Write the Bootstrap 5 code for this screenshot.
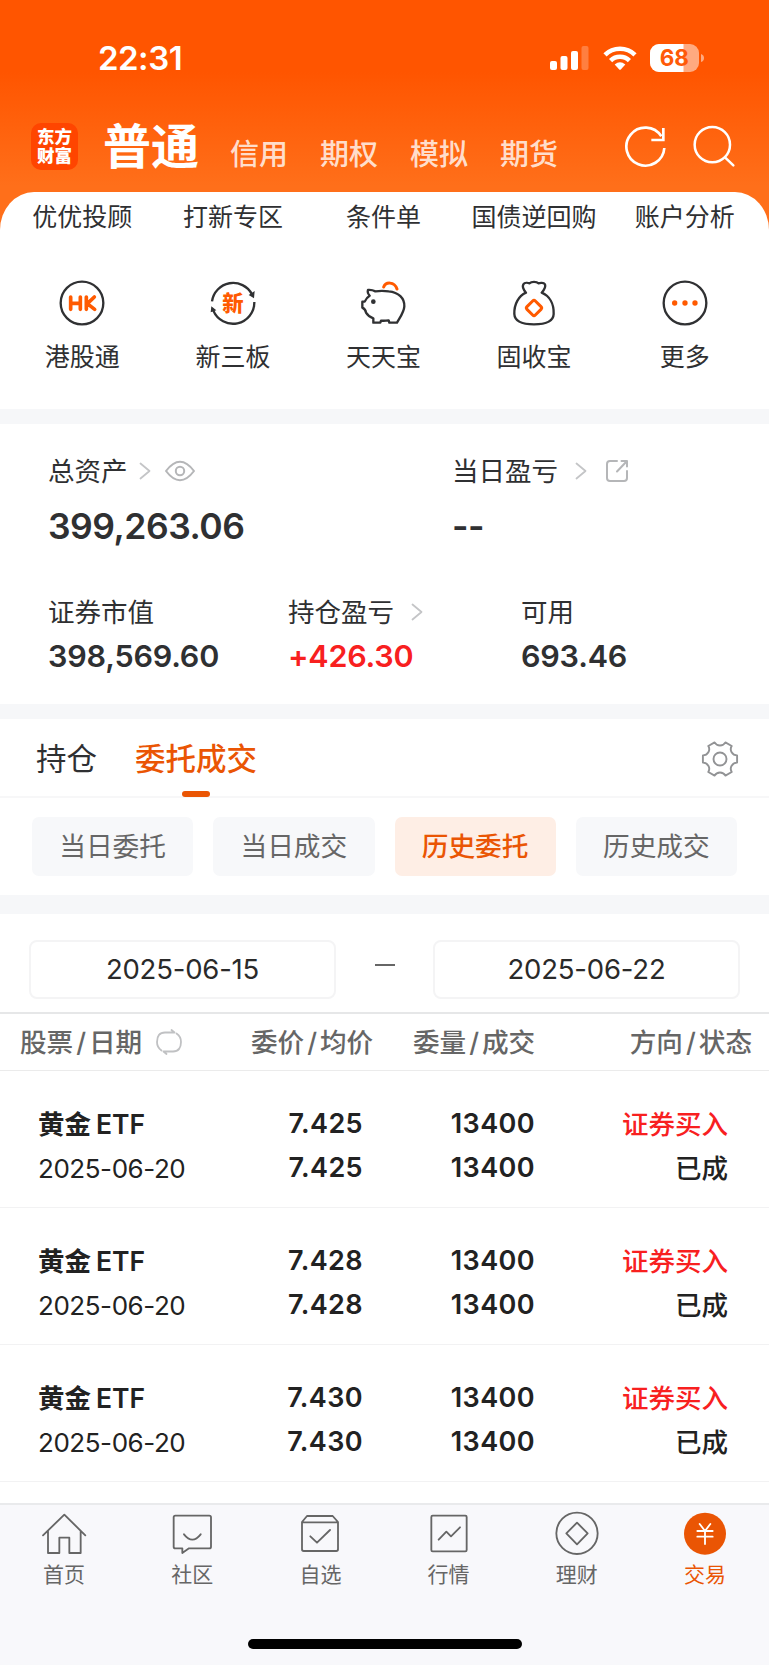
<!DOCTYPE html>
<html lang="zh-CN">
<head>
    <meta charset="UTF-8">
    <meta name="viewport" content="width=device-width, initial-scale=1.0">
    <title>交易 - 东方财富</title>
    <link href="https://cdn.jsdelivr.net/npm/bootstrap@5.3.0/dist/css/bootstrap.min.css" rel="stylesheet">
    <style>
        body {
            font-family: Inter, "Noto Sans CJK SC", sans-serif;
            color: #2f3032;
            background: #fff;
            height: 1665px;
            overflow: hidden;
        }
        svg { display: block; flex: none; fill: none; stroke-linecap: round; stroke-linejoin: round; }
        .text-brand { color: #ea5504 !important; }
        .text-rise { color: #f8201f; }

        /* Header */
        .top-area { background: linear-gradient(#ff5500 0, #ff5500 72px, #ff6f1a 186px, #ff6f1a 100%); }
        .status-bar { height: 115px; padding: 0 65px 0 98px; }
        .clock { font-size: 33px; line-height: 40px; font-weight: 600; letter-spacing: -.5px; }
        .wifi { margin-left: 14px; stroke-linecap: butt; }
        .battery { margin-left: 13px; }
        .account-bar { height: 77px; padding: 0 33px 0 31px; }
        .logo { width: 47px; height: 47px; border-radius: 10px; background: #ff4500; font-size: 17.5px; line-height: 19px; font-weight: 900; padding-top: 4px; }
        .account-main { font-size: 48px; line-height: 62px; font-weight: 700; margin-left: 25px; padding-top: 1px; }
        .account-tabs { margin: 22px 0 0 31px; }
        .account-tab { font-size: 29px; line-height: 36px; font-weight: 500; color: rgba(255, 255, 255, .8); width: 90px; }
        .head-icon { margin-top: 9px; }
        .head-search { margin-left: 24px; }

        /* Shortcuts */
        .sheet { height: 217px; border-radius: 34px 34px 0 0 / 38px 38px 0 0; background: #fff; padding: 9px 9px 0 7px; }
        .shortcut { flex: 0 0 20%; text-align: center; font-size: 25px; line-height: 32px; white-space: nowrap; }
        .shortcut svg { margin: 0 auto 15px; }
        .shortcut-row { padding-top: 47px; }
        .band { background: #f6f7f9; height: 15px; }
        .band-tall { height: 19px; }

        /* Assets */
        .assets { height: 280px; padding: 27px 48px 0; }
        .label-line { font-size: 26.5px; line-height: 40px; height: 40px; }
        .chevron { margin-left: 17px; }
        .chevron-near { margin-left: 11px; }
        .eye { margin-left: 13px; }
        .share { margin-left: 18px; }
        .total { font-size: 35.5px; line-height: 44px; font-weight: 600; margin-top: 14px; letter-spacing: -.5px; }
        .amount { font-size: 30.5px; line-height: 40px; font-weight: 600; margin-top: 4px; letter-spacing: -.2px; }
        .assets-top > div:first-child { width: 404px; }
        .assets-bottom { margin-top: 43px; }
        .assets-bottom > div:nth-child(1) { width: 240px; }
        .assets-bottom > div:nth-child(2) { width: 233px; }

        /* Order tabs */
        .order-tabs { height: 79px; padding: 0 30px 0 36px; border-bottom: 2px solid #f7f7f8; }
        .order-tab { font-size: 30.5px; line-height: 46px; padding-top: 17px; }
        .tab-active { margin-left: 38px; }
        .tab-active::after { content: ""; display: block; width: 28px; height: 6px; border-radius: 3px; background: #ea5504; margin: 9px auto 0; }
        .gear { margin-top: 21px; }
        .pills { height: 97px; padding: 19px 32px 0; gap: 20px; }
        .pill { flex: 1; height: 59px; border-radius: 7px; background: #f7f8fa; color: #666; font-size: 26.7px; line-height: 59px; text-align: center; }
        .pill-active { background: #feeee5; color: #ea5504; font-weight: 500; }

        /* Date range */
        .date-range { height: 98px; padding: 26px 29px 0; }
        .date-box { width: 307px; height: 59px; border: 2px solid #f4f4f5; border-radius: 8px; font-size: 27.5px; line-height: 55px; text-align: center; color: #2a2a2a; letter-spacing: -.2px; }
        .date-dash { width: 20px; height: 2px; background: #666; margin-top: 24px; }

        /* Orders */
        .order-head { height: 59px; border-top: 2px solid #e6e7e8; border-bottom: 1px solid #ebebeb; font-size: 26.6px; line-height: 56px; color: #666; font-weight: 500; padding: 0 17px 0 20px; }
        .slash { padding: 0 3px; }
        .swap { margin-left: 13px; }
        .order-row { height: 137px; border-bottom: 1px solid #f2f2f3; padding: 31px 41px 0 38px; font-size: 26.5px; line-height: 44px; color: #222; font-weight: 600; }
        .order-row > div { white-space: nowrap; }
        .etf { margin-left: 5px; }
        .order-date { font-size: 26px; letter-spacing: -.45px; }
        .col-name { width: 184px; }
        .col-price, .col-qty { font-size: 27px; letter-spacing: .4px; text-align: right; }
        .col-price { width: 141px; }
        .col-qty { width: 172px; }
        .head-name { width: 231px; }
        .head-price { width: 162px; }
        .list-end { height: 21px; }

        /* Bottom bar */
        .bottom-bar { height: 162px; background: #f8f8fb; border-top: 2px solid #e9eaec; padding-top: 6px; }
        .bottom-item { flex: 1; text-align: center; font-size: 21px; line-height: 30px; color: #666; }
        .bottom-item svg { margin: 0 auto 3px; }
        .home-bar { width: 274px; height: 10px; border-radius: 5px; background: #000; margin: 49px auto 0; }
    </style>
</head>
<body>

    <div class="top-area">
        <!-- Status bar -->
        <div class="status-bar d-flex align-items-center text-white">
            <span class="clock me-auto">22:31</span>
            <svg width="39" height="26" viewBox="0 0 39 26">
                <g fill="#fff">
                    <rect x="0" y="16" width="7" height="9" rx="2"/>
                    <rect x="10.500" y="11" width="7" height="14" rx="2"/>
                    <rect x="21" y="6" width="7" height="19" rx="2"/>
                    <rect x="31.500" y="1" width="7" height="24" rx="2" opacity=".25"/>
                </g>
            </svg>
            <svg class="wifi" width="34" height="26" viewBox="0 0 34 26">
                <g stroke="#fff" stroke-width="4.600">
                    <path d="M2 9.800A21.500 21.500 0 0 1 32 9.800"/>
                    <path d="M7.600 15.600A13.500 13.500 0 0 1 26.400 15.600"/>
                </g>
                <path fill="#fff" d="M11.700 19.500Q17 15.200 22.300 19.500L17.800 24.400Q17 25.200 16.200 24.400Z"/>
            </svg>
            <svg class="battery" width="54" height="28" viewBox="0 0 54 28">
                <rect x="0" y="0" width="49" height="28" rx="9" fill="#fff" opacity=".5"/>
                <path d="M9 0H33.500V28H9A9 9 0 0 1 0 19V9A9 9 0 0 1 9 0Z" fill="#fff"/>
                <path d="M51 10Q54 11 54 14T51 18Z" fill="#fff" opacity=".5"/>
                <text x="24.300" y="22" text-anchor="middle" font-size="22.500" font-weight="700" fill="#ff5a08">68</text>
            </svg>
        </div>

        <!-- Account types -->
        <div class="account-bar d-flex text-white">
            <div class="logo text-center mt-2">东方<br>财富</div>
            <div class="account-main">普通</div>
            <div class="account-tabs d-flex">
                <div class="account-tab">信用</div>
                <div class="account-tab">期权</div>
                <div class="account-tab">模拟</div>
                <div class="account-tab">期货</div>
            </div>
            <svg class="head-icon ms-auto" width="44" height="46" viewBox="717 371 132 138">
                <g stroke="#fff" stroke-width="8" stroke-linecap="butt" stroke-linejoin="miter">
                    <path d="M838 443A57 57 0 1 1 829 408"/>
                    <path d="M835 383V419H799"/>
                </g>
            </svg>
            <svg class="head-icon head-search" width="44" height="46" viewBox="920 371 132 138">
                <g stroke="#fff" stroke-width="7.500">
                    <circle cx="981" cy="433" r="53"/>
                    <path d="M1019 471L1044 495"/>
                </g>
            </svg>
        </div>

        <!-- Shortcuts -->
        <div class="sheet">
            <div class="d-flex">
                <div class="shortcut">优优投顾</div>
                <div class="shortcut">打新专区</div>
                <div class="shortcut">条件单</div>
                <div class="shortcut">国债逆回购</div>
                <div class="shortcut">账户分析</div>
            </div>
            <div class="shortcut-row d-flex">
                <div class="shortcut">
                    <svg width="46" height="46" viewBox="180 120 138 138">
                        <circle cx="249" cy="189" r="64" stroke="#303133" stroke-width="7"/>
                        <g stroke="#ff5a00" stroke-width="11"><path d="M215 171V208M244 171V208M215 190H244M262 171V208M286 171L265 191L287 208"/></g>
                    </svg>
                    港股通
                </div>
                <div class="shortcut">
                    <svg width="46" height="46" viewBox="632 120 138 138">
                        <g stroke="#303133" stroke-width="7" stroke-linecap="butt"><path d="M638 184A64 64 0 0 1 758 163M765 186A64 64 0 0 1 642 212"/></g>
                        <path fill="#303133" d="M766 153L764 175L748 165ZM636 199L651 211L634 217Z"/>
                        <text x="701" y="212" text-anchor="middle" font-size="64" font-weight="900" fill="#ff5a00">新</text>
                    </svg>
                    新三板
                </div>
                <div class="shortcut">
                    <svg width="46" height="46" viewBox="18 28 138 138">
                        <path stroke="#303133" stroke-width="7" d="M42 58Q54 57 64 62Q84 59 104 62C134 65 152 82 151 107C150 125 137 141 129 156H106L104 149Q92 151 81 150L79 156H58V143Q43 138 36 126Q35 116 25 111V93H32Q37 81 47 75Q39 66 42 58Z"/>
                        <circle cx="58" cy="93" r="7" fill="#303133"/>
                        <path stroke="#ff5a00" stroke-width="9" d="M89 49C95 33 121 32 129 55"/>
                    </svg>
                    天天宝
                </div>
                <div class="shortcut">
                    <svg width="46" height="46" viewBox="379 120 138 138">
                        <path stroke="#303133" stroke-width="7" d="M424 158C416 149 412 141 416 133C420 127 430 128 435 130C440 124 456 124 461 130C466 128 477 127 481 133C484 141 478 150 471 158C495 168 508 192 507 222C506 245 480 253 448 253C416 253 390 245 389 222C388 192 402 168 424 158Z"/>
                        <path stroke="#ff5a00" stroke-width="9" d="M444 183Q448 179 452 183L469 200Q473 204 469 208L452 225Q448 229 444 225L427 208Q423 204 427 200Z"/>
                    </svg>
                    固收宝
                </div>
                <div class="shortcut">
                    <svg width="46" height="46" viewBox="831 120 138 138">
                        <circle cx="900" cy="189" r="64" stroke="#303133" stroke-width="7"/>
                        <g fill="#ff5a00"><circle cx="869" cy="189" r="8"/><circle cx="900" cy="189" r="8"/><circle cx="930" cy="189" r="8"/></g>
                    </svg>
                    更多
                </div>
            </div>
        </div>
    </div>

    <div class="band"></div>

    <!-- Assets -->
    <div class="assets">
        <div class="assets-top d-flex">
            <div>
                <div class="label-line d-flex align-items-center">
                    总资产
                    <svg class="chevron-near" width="12" height="18" viewBox="0 0 12 18"><path stroke="#c4c5c7" stroke-width="1.800" d="M1.500 1.500L10.500 9L1.500 16.500"/></svg>
                    <svg class="eye" width="32" height="22" viewBox="0 0 32 22">
                        <g stroke="#b5b6b8" stroke-width="2"><path d="M2 11Q16-7.500 30 11Q16 29.500 2 11Z"/><circle cx="16" cy="11" r="4.200"/></g>
                    </svg>
                </div>
                <div class="total">399,263.06</div>
            </div>
            <div>
                <div class="label-line d-flex align-items-center">
                    当日盈亏
                    <svg class="chevron" width="12" height="18" viewBox="0 0 12 18"><path stroke="#c4c5c7" stroke-width="1.800" d="M1.500 1.500L10.500 9L1.500 16.500"/></svg>
                    <svg class="share" width="24" height="24" viewBox="0 0 24 24">
                        <g stroke="#b5b6b8" stroke-width="2"><path d="M12 2H5Q2 2 2 5V19Q2 22 5 22H19Q22 22 22 19V12"/><path d="M16.500 2H22V7.500M22 2L12 12.500"/></g>
                    </svg>
                </div>
                <div class="total">--</div>
            </div>
        </div>
        <div class="assets-bottom d-flex">
            <div>
                <div class="label-line">证券市值</div>
                <div class="amount">398,569.60</div>
            </div>
            <div>
                <div class="label-line d-flex align-items-center">
                    持仓盈亏
                    <svg class="chevron" width="12" height="18" viewBox="0 0 12 18"><path stroke="#c4c5c7" stroke-width="1.800" d="M1.500 1.500L10.500 9L1.500 16.500"/></svg>
                </div>
                <div class="amount text-rise">+426.30</div>
            </div>
            <div>
                <div class="label-line">可用</div>
                <div class="amount">693.46</div>
            </div>
        </div>
    </div>

    <div class="band"></div>

    <!-- Order tabs -->
    <div class="order-tabs d-flex">
        <div class="order-tab">持仓</div>
        <div class="order-tab tab-active text-brand fw-medium">委托成交</div>
        <svg class="gear ms-auto" width="38" height="38" viewBox="-19 -19 38 38">
            <g stroke="#929395" stroke-width="1.900">
                <path d="M17.100 3.600V-3.600A6.200 6.200 0 0 1 11.700-13L5.400-16.600A6.200 6.200 0 0 1-5.400-16.600L-11.700-13A6.200 6.200 0 0 1-17.100-3.600V3.600A6.200 6.200 0 0 1-11.700 13L-5.400 16.600A6.200 6.200 0 0 1 5.400 16.600L11.700 13A6.200 6.200 0 0 1 17.100 3.600Z"/>
                <circle r="6.500"/>
            </g>
        </svg>
    </div>
    <div class="pills d-flex">
        <div class="pill">当日委托</div>
        <div class="pill">当日成交</div>
        <div class="pill pill-active">历史委托</div>
        <div class="pill">历史成交</div>
    </div>

    <div class="band band-tall"></div>

    <!-- Date range -->
    <div class="date-range d-flex justify-content-between">
        <div class="date-box">2025-06-15</div>
        <div class="date-dash"></div>
        <div class="date-box">2025-06-22</div>
    </div>

    <!-- Orders -->
    <div class="order-head d-flex">
        <div class="head-name d-flex align-items-center">
            <span>股票<span class="slash">/</span>日期</span>
            <svg class="swap" width="28" height="28" viewBox="0 0 28 28">
                <g stroke="#c0c1c3" stroke-width="1.800">
                    <path d="M6.500 22.500Q2 19.500 2 14Q2 4.500 10 4.500H19.500L16.500 2"/>
                    <path d="M21.500 5.500Q26 8.500 26 14Q26 23.500 18 23.500H8.500L11.500 26"/>
                </g>
            </svg>
        </div>
        <div class="head-price">委价<span class="slash">/</span>均价</div>
        <div>委量<span class="slash">/</span>成交</div>
        <div class="ms-auto">方向<span class="slash">/</span>状态</div>
    </div>
    <div class="order-row d-flex">
        <div class="col-name">黄金<span class="etf">ETF</span><br><span class="order-date fw-normal">2025-06-20</span></div>
        <div class="col-price">7.425<br>7.425</div>
        <div class="col-qty">13400<br>13400</div>
        <div class="ms-auto text-end fw-medium"><span class="text-rise">证券买入</span><br>已成</div>
    </div>
    <div class="order-row d-flex">
        <div class="col-name">黄金<span class="etf">ETF</span><br><span class="order-date fw-normal">2025-06-20</span></div>
        <div class="col-price">7.428<br>7.428</div>
        <div class="col-qty">13400<br>13400</div>
        <div class="ms-auto text-end fw-medium"><span class="text-rise">证券买入</span><br>已成</div>
    </div>
    <div class="order-row d-flex">
        <div class="col-name">黄金<span class="etf">ETF</span><br><span class="order-date fw-normal">2025-06-20</span></div>
        <div class="col-price">7.430<br>7.430</div>
        <div class="col-qty">13400<br>13400</div>
        <div class="ms-auto text-end fw-medium"><span class="text-rise">证券买入</span><br>已成</div>
    </div>
    <div class="list-end"></div>

    <!-- Bottom bar -->
    <div class="bottom-bar">
        <div class="d-flex">
            <div class="bottom-item">
                <svg width="46" height="46" viewBox="123 64 138 138"><path stroke="#666" stroke-width="5.500" d="M129 137L193 75L256 137M144 125V190H178V144H208V190H242V125"/></svg>
                首页
            </div>
            <div class="bottom-item">
                <svg width="46" height="46" viewBox="507 64 138 138"><path stroke="#666" stroke-width="5.500" d="M526 78H628Q633 78 633 83V171Q633 176 628 176H567L547 190V176H526Q521 176 521 171V83Q521 78 526 78ZM552 134Q577 166 602 134"/></svg>
                社区
            </div>
            <div class="bottom-item">
                <svg width="46" height="46" viewBox="891 64 138 138"><path stroke="#666" stroke-width="5.500" d="M906 97L921 79H998L1014 97V179Q1014 184 1009 184H911Q906 184 906 179ZM906 98H1014M931 140L951 159L990 121"/></svg>
                自选
            </div>
            <div class="bottom-item">
                <svg width="46" height="46" viewBox="120 64 138 138"><path stroke="#666" stroke-width="5.500" d="M140 78H238Q242 78 242 82V181Q242 185 238 185H140Q136 185 136 181V82Q136 78 140 78ZM158 150L181 126L195 140L222 113"/></svg>
                行情
            </div>
            <div class="bottom-item">
                <svg width="46" height="46" viewBox="504 64 138 138"><g stroke="#666" stroke-width="5.500"><circle cx="573" cy="131" r="62"/><path d="M573 99L605 131L573 164L541 131Z"/></g></svg>
                理财
            </div>
            <div class="bottom-item text-brand">
                <svg width="46" height="46" viewBox="887 64 138 138"><circle cx="956" cy="132" r="63" fill="#ea5504"/><path stroke="#fff" stroke-width="5.500" d="M940 103L956 124L972 103M956 124V163M933 124H979M933 141H979"/></svg>
                交易
            </div>
        </div>
        <div class="home-bar"></div>
    </div>

    <script src="https://cdn.jsdelivr.net/npm/bootstrap@5.3.0/dist/js/bootstrap.bundle.min.js"></script>
</body>
</html>
